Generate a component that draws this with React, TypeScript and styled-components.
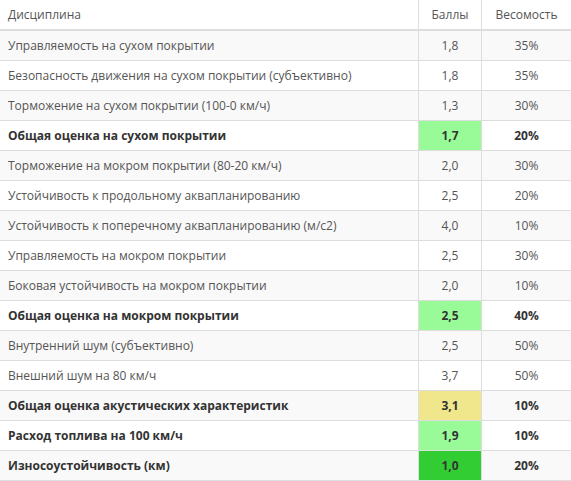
import React from 'react';
import styled, { createGlobalStyle } from 'styled-components';

const GlobalStyle = createGlobalStyle`
  html, body {
    margin: 0;
    padding: 0;
    background: #fff;
  }
  body {
    font-family: "Open Sans", "Liberation Sans", sans-serif;
  }
`;

type Row = {
  name: string;
  score: string;
  weight: string;
  total?: boolean;
  mark?: string;
};

const rows: Row[] = [
  { name: 'Управляемость на сухом покрытии', score: '1,8', weight: '35%' },
  { name: 'Безопасность движения на сухом покрытии (субъективно)', score: '1,8', weight: '35%' },
  { name: 'Торможение на сухом покрытии (100-0 км/ч)', score: '1,3', weight: '30%' },
  { name: 'Общая оценка на сухом покрытии', score: '1,7', weight: '20%', total: true, mark: '#98fb98' },
  { name: 'Торможение на мокром покрытии (80-20 км/ч)', score: '2,0', weight: '30%' },
  { name: 'Устойчивость к продольному аквапланированию', score: '2,5', weight: '20%' },
  { name: 'Устойчивость к поперечному аквапланированию (м/с2)', score: '4,0', weight: '10%' },
  { name: 'Управляемость на мокром покрытии', score: '2,5', weight: '30%' },
  { name: 'Боковая устойчивость на мокром покрытии', score: '2,0', weight: '10%' },
  { name: 'Общая оценка на мокром покрытии', score: '2,5', weight: '40%', total: true, mark: '#98fb98' },
  { name: 'Внутренний шум (субъективно)', score: '2,5', weight: '50%' },
  { name: 'Внешний шум на 80 км/ч', score: '3,7', weight: '50%' },
  { name: 'Общая оценка акустических характеристик', score: '3,1', weight: '10%', total: true, mark: '#f0e68c' },
  { name: 'Расход топлива на 100 км/ч', score: '1,9', weight: '10%', total: true, mark: '#98fb98' },
  { name: 'Износоустойчивость (км)', score: '1,0', weight: '20%', total: true, mark: '#32cd32' },
];

const Table = styled.table`
  width: 571px;
  border-collapse: collapse;
  border-spacing: 0;
  font-size: 12px;
  line-height: 13px;
  color: #555;
`;

const HeadCell = styled.th<{ $align?: string; $width?: number }>`
  padding: 8px;
  height: 13px;
  font-weight: 400;
  text-align: ${(p) => p.$align || 'left'};
  width: ${(p) => (p.$width ? `${p.$width - 17}px` : 'auto')};
  border-bottom: 2px solid #ddd;
  & + & {
    border-left: 1px solid #ddd;
  }
`;

const BodyRow = styled.tr`
  &:nth-child(odd) {
    background: #f9f9f9;
  }
`;

const Cell = styled.td<{ $align?: string; $bold?: boolean; $mark?: string }>`
  padding: 8px;
  height: 13px;
  text-align: ${(p) => p.$align || 'left'};
  font-weight: ${(p) => (p.$bold ? 700 : 400)};
  color: ${(p) => (p.$bold ? '#333' : '#555')};
  background: ${(p) => p.$mark || 'transparent'};
  border-bottom: 1px solid #ddd;
  white-space: nowrap;
  & + & {
    border-left: 1px solid #ddd;
  }
`;

export default function App() {
  return (
    <>
      <GlobalStyle />
      <Table>
        <thead>
          <tr>
            <HeadCell>Дисциплина</HeadCell>
            <HeadCell $align="center" $width={63}>Баллы</HeadCell>
            <HeadCell $align="center" $width={90}>Весомость</HeadCell>
          </tr>
        </thead>
        <tbody>
          {rows.map((r) => (
            <BodyRow key={r.name}>
              <Cell $bold={r.total}>{r.name}</Cell>
              <Cell $align="center" $bold={r.total} $mark={r.mark}>{r.score}</Cell>
              <Cell $align="center" $bold={r.total}>{r.weight}</Cell>
            </BodyRow>
          ))}
        </tbody>
      </Table>
    </>
  );
}
